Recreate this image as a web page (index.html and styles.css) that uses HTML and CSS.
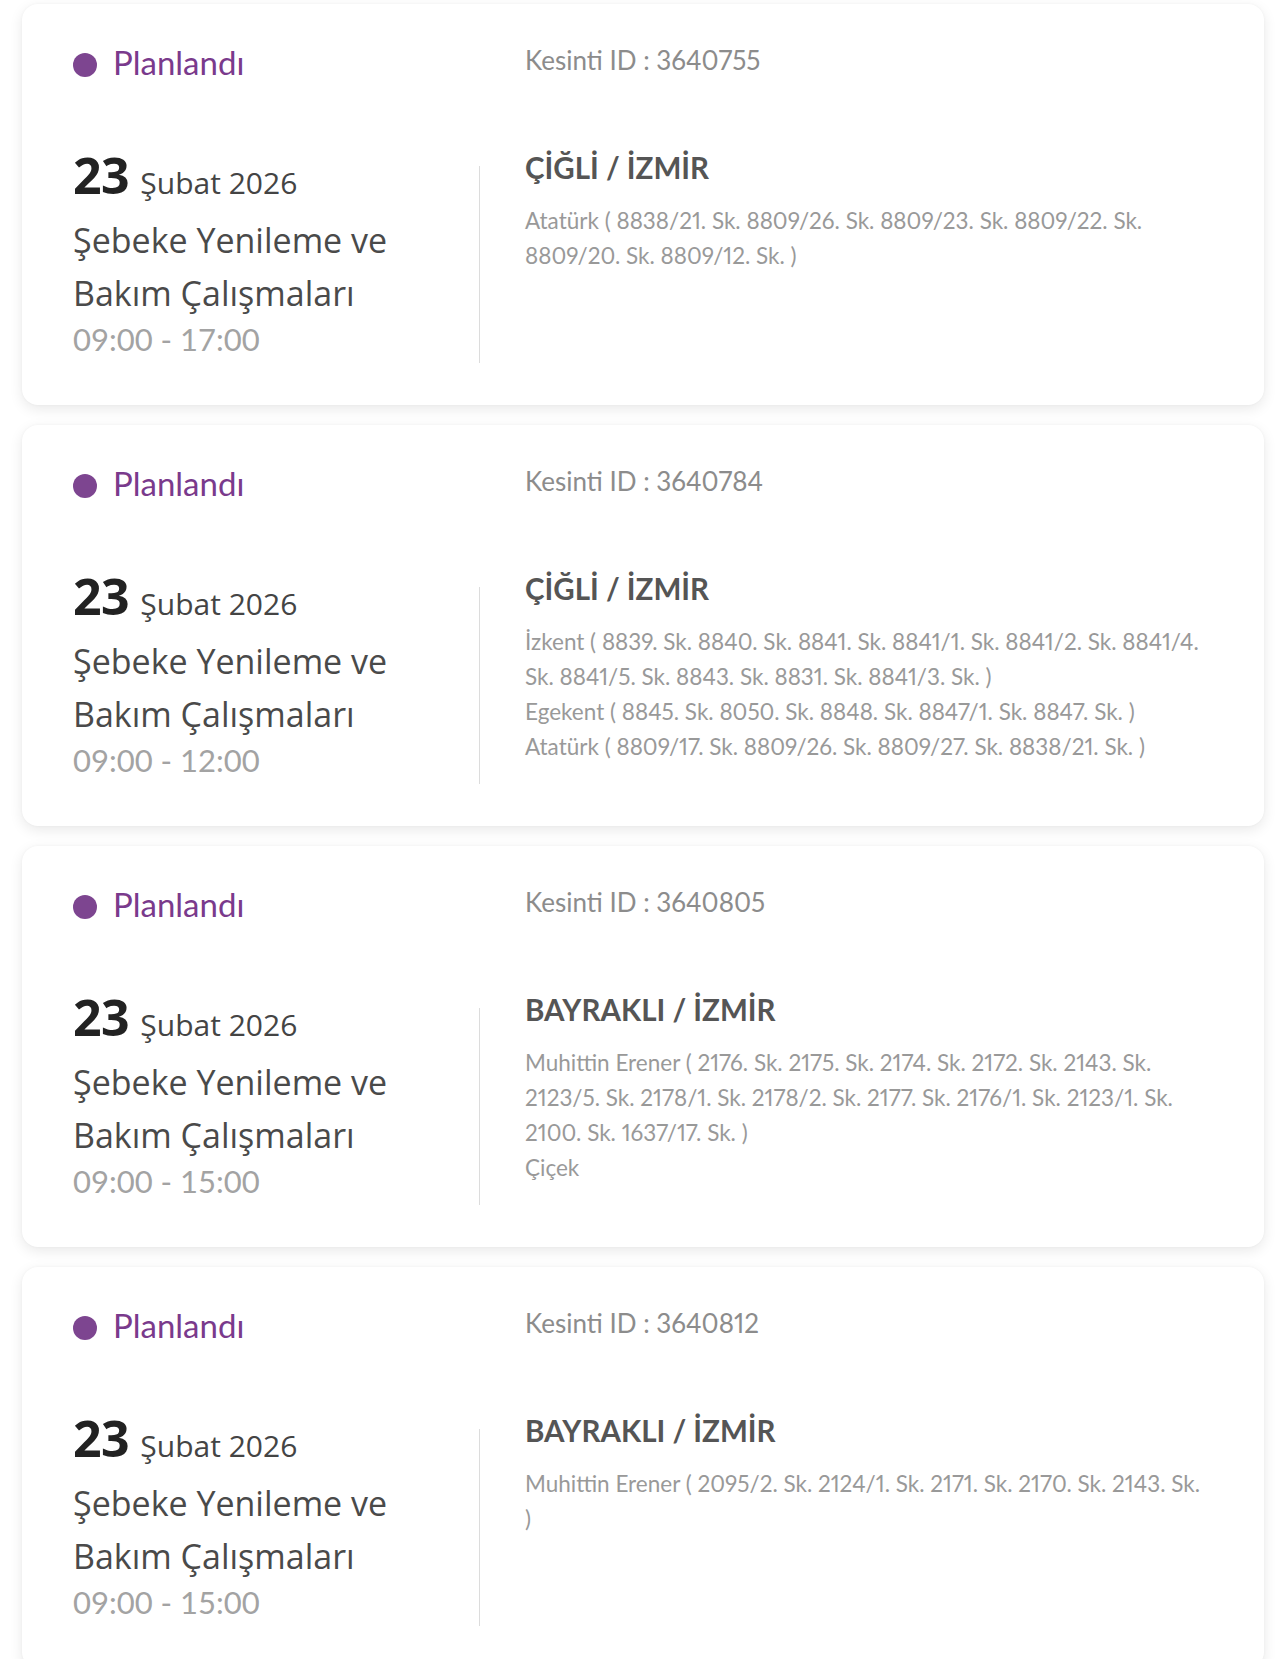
FILE: index.html
```html
<!DOCTYPE html>
<html lang="tr">
<head>
<meta charset="utf-8">
<title>Planlı Kesintiler</title>
<link rel="stylesheet" href="styles.css">
</head>
<body>
<main class="list">
  <article class="card">
    <div class="status"><span class="dot"></span><span class="status-text">Planlandı</span></div>
    <div class="outage-id">Kesinti ID : 3640755</div>
    <div class="when">
      <div class="date"><span class="day">23</span> <span class="month">Şubat 2026</span></div>
      <div class="title">Şebeke Yenileme ve Bakım Çalışmaları</div>
      <div class="time">09:00 - 17:00</div>
    </div>
    <div class="divider"></div>
    <div class="where">
      <div class="city">ÇİĞLİ / İZMİR</div>
      <p class="streets">Atatürk ( 8838/21. Sk. 8809/26. Sk. 8809/23. Sk. 8809/22. Sk. 8809/20. Sk. 8809/12. Sk. )</p>
    </div>
  </article>

  <article class="card">
    <div class="status"><span class="dot"></span><span class="status-text">Planlandı</span></div>
    <div class="outage-id">Kesinti ID : 3640784</div>
    <div class="when">
      <div class="date"><span class="day">23</span> <span class="month">Şubat 2026</span></div>
      <div class="title">Şebeke Yenileme ve Bakım Çalışmaları</div>
      <div class="time">09:00 - 12:00</div>
    </div>
    <div class="divider"></div>
    <div class="where">
      <div class="city">ÇİĞLİ / İZMİR</div>
      <p class="streets">İzkent ( 8839. Sk. 8840. Sk. 8841. Sk. 8841/1. Sk. 8841/2. Sk. 8841/4. Sk. 8841/5. Sk. 8843. Sk. 8831. Sk. 8841/3. Sk. )</p>
      <p class="streets">Egekent ( 8845. Sk. 8050. Sk. 8848. Sk. 8847/1. Sk. 8847. Sk. )</p>
      <p class="streets">Atatürk ( 8809/17. Sk. 8809/26. Sk. 8809/27. Sk. 8838/21. Sk. )</p>
    </div>
  </article>

  <article class="card">
    <div class="status"><span class="dot"></span><span class="status-text">Planlandı</span></div>
    <div class="outage-id">Kesinti ID : 3640805</div>
    <div class="when">
      <div class="date"><span class="day">23</span> <span class="month">Şubat 2026</span></div>
      <div class="title">Şebeke Yenileme ve Bakım Çalışmaları</div>
      <div class="time">09:00 - 15:00</div>
    </div>
    <div class="divider"></div>
    <div class="where">
      <div class="city">BAYRAKLI / İZMİR</div>
      <p class="streets">Muhittin Erener ( 2176. Sk. 2175. Sk. 2174. Sk. 2172. Sk. 2143. Sk. 2123/5. Sk. 2178/1. Sk. 2178/2. Sk. 2177. Sk. 2176/1. Sk. 2123/1. Sk. 2100. Sk. 1637/17. Sk. )</p>
      <p class="streets">Çiçek</p>
    </div>
  </article>

  <article class="card">
    <div class="status"><span class="dot"></span><span class="status-text">Planlandı</span></div>
    <div class="outage-id">Kesinti ID : 3640812</div>
    <div class="when">
      <div class="date"><span class="day">23</span> <span class="month">Şubat 2026</span></div>
      <div class="title">Şebeke Yenileme ve Bakım Çalışmaları</div>
      <div class="time">09:00 - 15:00</div>
    </div>
    <div class="divider"></div>
    <div class="where">
      <div class="city">BAYRAKLI / İZMİR</div>
      <p class="streets">Muhittin Erener ( 2095/2. Sk. 2124/1. Sk. 2171. Sk. 2170. Sk. 2143. Sk. )</p>
    </div>
  </article>
</main>
</body>
</html>
```

FILE: styles.css
```css
* { box-sizing: border-box; }

html, body {
  margin: 0;
  padding: 0;
  background: #ffffff;
}

body {
  font-family: "Lato", "Noto Sans", sans-serif;
  color: #555;
}

.list {
  display: flex;
  flex-direction: column;
  gap: 20px;
  padding: 4px 16px 40px 22px;
}

.card {
  background: #fff;
  border-radius: 16px;
  box-shadow: 0 4px 14px rgba(0, 0, 0, 0.09), 0 0 3px rgba(0, 0, 0, 0.04);
  padding: 40px 58px 42px 51px;
  display: grid;
  grid-template-columns: 360px 46px 1px 1fr;
  grid-template-rows: auto auto;
  row-gap: 67px;
}

.status {
  grid-column: 1 / 4;
  grid-row: 1;
  display: flex;
  align-items: center;
  gap: 16px;
  height: 40px;
}

.dot {
  width: 24px;
  height: 24px;
  border-radius: 50%;
  background: #7d4590;
  flex: none;
  margin-top: 1px;
}

.status-text {
  font-size: 33px;
  line-height: 34px;
  color: #7a3a8c;
  margin-bottom: 5px;
}

.outage-id {
  grid-column: 4;
  grid-row: 1;
  padding-left: 45px;
  font-size: 26px;
  line-height: 32px;
  color: #8c8c8c;
  font-variant-numeric: proportional-nums;
}

.when {
  grid-column: 1;
  grid-row: 2;
  padding-bottom: 4px;
}

.date {
  height: 48px;
  line-height: 48px;
  white-space: nowrap;
  font-family: "Open Sans", "Noto Sans", sans-serif;
}

.day {
  font-size: 50px;
  font-weight: 700;
  color: #222;
  letter-spacing: -0.5px;
}

.month {
  font-size: 30px;
  color: #444;
  margin-left: 7px;
}

.title {
  margin-top: 15px;
  font-family: "Open Sans", "Noto Sans", sans-serif;
  font-size: 34px;
  line-height: 53px;
  color: #4a4a4a;
}

.time {
  margin-top: -1px;
  font-size: 31px;
  line-height: 40px;
  color: #a3a3a3;
}

.divider {
  grid-column: 3;
  grid-row: 2;
  margin-top: 15px;
  background: #dcdcdc;
}

.where {
  grid-column: 4;
  grid-row: 2;
  padding-left: 45px;
}

.city {
  font-size: 29.5px;
  line-height: 34px;
  font-weight: 700;
  color: #555;
  margin-bottom: 18px;
}

.streets {
  margin: 0;
  font-size: 22.5px;
  line-height: 35px;
  color: #999;
  font-variant-numeric: proportional-nums;
}
```
